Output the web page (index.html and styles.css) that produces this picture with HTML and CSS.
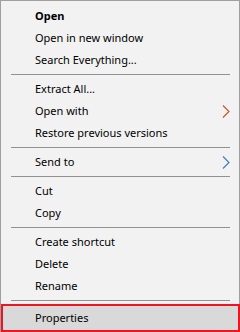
FILE: index.html
```html
<!DOCTYPE html>
<html lang="en">
<head>
    <meta charset="UTF-8">
    <title>Context menu</title>
    <link rel="stylesheet" href="styles.css">
</head>
<body>
    <div class="menu">
        <div class="item bold">Open</div>
        <div class="item">Open in new window</div>
        <div class="item">Search Everything...</div>
        <div class="sep"></div>
        <div class="item">Extract All...</div>
        <div class="item">Open with
            <svg class="arrow" width="8" height="13" viewBox="0 0 8 13"><polyline points="1,0.5 7,6.5 1,12.5" fill="none" stroke="#c8502a" stroke-width="1.1"/></svg>
        </div>
        <div class="item">Restore previous versions</div>
        <div class="sep"></div>
        <div class="item">Send to
            <svg class="arrow" width="8" height="13" viewBox="0 0 8 13"><polyline points="1,0.5 7,6.5 1,12.5" fill="none" stroke="#3a7cc4" stroke-width="1.1"/></svg>
        </div>
        <div class="sep"></div>
        <div class="item">Cut</div>
        <div class="item">Copy</div>
        <div class="sep"></div>
        <div class="item">Create shortcut</div>
        <div class="item">Delete</div>
        <div class="item">Rename</div>
        <div class="sep"></div>
        <div class="item selected">Properties</div>
    </div>
</body>
</html>
```

FILE: styles.css
```css
body {
    margin: 0;
    font-family: "Noto Sans", "Open Sans", sans-serif;
    font-size: 11px;
    color: #000;
}
.menu {
    width: 240px;
    height: 332px;
    box-sizing: border-box;
    border: 1px solid #a0a0a0;
    background: #f2f2f2;
    padding-top: 4px;
}
.item {
    height: 22px;
    line-height: 22px;
    padding: 0 9px 0 34px;
    display: flex;
    justify-content: space-between;
    align-items: center;
    white-space: nowrap;
}
.bold { font-weight: bold; }
.arrow { display: block; }
.sep {
    height: 7px;
    display: flex;
    align-items: center;
    padding: 0 9px 0 10px;
}
.sep::before {
    content: "";
    flex: 1;
    height: 1px;
    background: #919191;
}
.selected {
    height: 28px;
    line-height: 24px;
    box-sizing: border-box;
    border: 2px solid #f0141e;
    background: #d9d9d9;
    padding-left: 32px;
    margin: 0 -1px 0 0;
    align-items: flex-start;
}
```
